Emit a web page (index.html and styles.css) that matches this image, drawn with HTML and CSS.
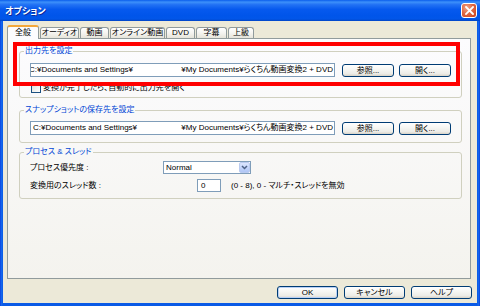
FILE: index.html
```html
<!DOCTYPE html>
<html lang="ja">
<head>
<meta charset="utf-8">
<title>オプション</title>
<link rel="stylesheet" href="styles.css">
</head>
<body>
<div class="window">
  <div class="titlebar">
    <span class="title">オプション</span>
    <span class="close"><svg width="9" height="9" viewBox="0 0 9 9"><path d="M1 1 L8 8 M8 1 L1 8" stroke="#fff" stroke-width="1.8" stroke-linecap="square"/></svg></span>
  </div>
  <div class="client">
    <div class="tabs">
      <div class="tab active t1">全般</div>
      <div class="tab t2">オーディオ</div>
      <div class="tab t3">動画</div>
      <div class="tab t4">オンライン動画</div>
      <div class="tab t5">DVD</div>
      <div class="tab t6">字幕</div>
      <div class="tab t7">上級</div>
    </div>
    <div class="panel">
      <fieldset class="group g1">
        <legend>出力先を設定</legend>
        <div class="pathrow">
          <div class="field path scrolled"><span class="seg first">C:¥Documents and Settings¥</span><span class="seg">¥My Documents¥らくちん動画変換2 + DVD</span></div>
          <button class="btn browse">参照...</button>
          <button class="btn open">開く...</button>
        </div>
        <div class="check"><span class="box"></span><span>変換が完了したら、自動的に出力先を開く</span></div>
      </fieldset>
      <fieldset class="group g2">
        <legend>スナップショットの保存先を設定</legend>
        <div class="pathrow">
          <div class="field path"><span class="seg first">C:¥Documents and Settings¥</span><span class="seg">¥My Documents¥らくちん動画変換2 + DVD</span></div>
          <button class="btn browse">参照...</button>
          <button class="btn open">開く...</button>
        </div>
      </fieldset>
      <fieldset class="group g3">
        <legend>プロセス &amp; スレッド</legend>
        <div class="row r1">
          <span class="lbl lbl1">プロセス優先度 :</span>
          <div class="select"><span class="val">Normal</span><span class="arrow"><svg width="7" height="5" viewBox="0 0 7 5"><path d="M1 1 L3.5 3.5 L6 1" fill="none" stroke="#4D6185" stroke-width="1.5"/></svg></span></div>
        </div>
        <div class="row r2">
          <span class="lbl lbl2">変換用のスレッド数 :</span>
          <div class="field spin">0</div>
          <span class="hint">(0 - 8), 0 - マルチ・スレッドを無効</span>
        </div>
      </fieldset>
    </div>
    <div class="footer">
      <button class="btn wide default">OK</button>
      <button class="btn wide">キャンセル</button>
      <button class="btn wide">ヘルプ</button>
    </div>
  </div>
  <div class="highlight"></div>
</div>
</body>
</html>
```
FILE: styles.css
```css
html, body {
  margin: 0;
  padding: 0;
  background: #fff;
}
body {
  font-family: "Liberation Sans", "Noto Sans CJK JP", sans-serif;
  font-size: 8px;
  font-feature-settings: "palt";
  color: #000;
}
.window {
  position: relative;
  width: 480px;
  height: 306px;
  display: flex;
  flex-direction: column;
  background: linear-gradient(to right, #0831D9 0, #166AEE 1px, #0A5AE6 3px, #0A5AE6 477px, #166AEE 479px, #0831D9 480px);
  overflow: hidden;
}
.titlebar {
  height: 21px;
  flex: none;
  display: flex;
  align-items: center;
  justify-content: space-between;
  padding: 0 3px 0 5px;
  background: linear-gradient(to bottom, #0A5EEC 0%, #3D90FA 10%, #2272F4 22%, #0659EE 45%, #0055EA 75%, #0256E8 90%, #0044C6 100%);
}
.title {
  color: #fff;
  font-weight: bold;
  font-size: 9px;
  line-height: 12px;
  text-shadow: 1px 1px 0 #0A2A9A;
}
.close {
  width: 16px;
  height: 15px;
  box-sizing: border-box;
  border: 1px solid #fff;
  border-radius: 3px;
  background: radial-gradient(circle at 35% 30%, #F0A68A 0%, #E06A45 45%, #C93D18 100%);
  display: flex;
  align-items: center;
  justify-content: center;
}
.client {
  flex: 1;
  margin: 0 3px 3px;
  background: #ECE9D8;
  padding: 4px 6px 4px 4px;
  display: flex;
  flex-direction: column;
}
.tabs {
  display: flex;
  align-items: flex-end;
  gap: 1px;
  height: 13px;
  position: relative;
  z-index: 1;
}
.tab {
  box-sizing: border-box;
  height: 11px;
  border: 1px solid #919B9C;
  border-bottom: none;
  border-radius: 3px 3px 0 0;
  background: linear-gradient(#FFFFFF, #F5F4F0 50%, #E6E4DA);
  text-align: center;
  line-height: 10px;
  white-space: nowrap;
}
.tab.active {
  height: 14px;
  margin-bottom: -1px;
  border-top: 2px solid #F3A73A;
  background: #FCFCFE;
  line-height: 12px;
}
.t1 { width: 32px; }
.t2 { width: 39px; }
.t3 { width: 29px; }
.t4 { width: 55px; }
.t5 { width: 29px; }
.t6 { width: 31px; }
.t7 { width: 26px; }

.panel {
  flex: none;
  height: 241px;
  box-sizing: border-box;
  border: 1px solid #919B9C;
  background: linear-gradient(#FCFCFE, #F4F3EE);
  padding: 6px 8px 0 11px;
}
.group {
  margin: 0;
  min-width: 0;
  border: 1px solid #D0D0BF;
  border-radius: 3px;
  padding: 6px 10px 4px;
}
.group legend {
  padding: 0 1px;
  margin-left: -6px;
  color: #0046D5;
  line-height: 12px;
}
.g2 { margin-top: 6px; padding-top: 5px; padding-bottom: 7px; }
.g3 { margin-top: 3px; padding-top: 3px; padding-bottom: 6px; }

.pathrow {
  display: flex;
  align-items: center;
}
.field {
  box-sizing: border-box;
  height: 14px;
  border: 1px solid #7F9DB9;
  background: #fff;
  line-height: 12px;
  white-space: nowrap;
  overflow: hidden;
}
.path {
  flex: 1;
  display: flex;
  justify-content: space-between;
  padding: 0 1px 0 2px;
}
.scrolled .first { margin-left: -4px; }
.btn {
  box-sizing: border-box;
  height: 13px;
  width: 52px;
  padding: 0;
  border: 1px solid #003C74;
  border-radius: 3px;
  background: linear-gradient(#FFFFFF, #F6F6F3 40%, #ECEBE6 80%, #D8D2C6);
  font: inherit;
  font-size: 8px;
  line-height: 11px;
  color: #000;
  text-align: center;
}
.browse { margin-left: 7px; }
.open { margin-left: 5px; }

.check {
  display: flex;
  align-items: center;
  margin-top: 5px;
  height: 11px;
  line-height: 11px;
}
.box {
  box-sizing: border-box;
  width: 10px;
  height: 10px;
  border: 1px solid #1C5180;
  background: linear-gradient(135deg, #DCDCD7, #FFFFFF);
  margin: 0 2px 0 1px;
}

.row {
  display: flex;
  align-items: center;
  height: 13px;
  line-height: 11px;
}
.r2 { margin-top: 5px; }
.lbl1 { width: 133px; }
.lbl2 { width: 167px; }
.select {
  box-sizing: border-box;
  width: 88px;
  height: 13px;
  border: 1px solid #7F9DB9;
  background: #fff;
  display: flex;
  align-items: stretch;
}
.select .val {
  flex: 1;
  padding-left: 2px;
  line-height: 11px;
}
.select .arrow {
  width: 11px;
  box-sizing: border-box;
  border: 1px solid #BACBF0;
  border-radius: 2px;
  background: linear-gradient(#DCE6FE, #C0D2FA 60%, #B0C6F5);
  display: flex;
  align-items: center;
  justify-content: center;
}
.spin {
  width: 24px;
  height: 13px;
  line-height: 11px;
  padding-left: 3px;
}
.hint { margin-left: 10px; }

.footer {
  display: flex;
  justify-content: flex-end;
  gap: 6px;
  margin-top: 7px;
  margin-right: -1px;
}
.wide { width: 61px; }
.default {
  box-shadow: inset 0 0 0 1px #B8D0F6;
}

.highlight {
  position: absolute;
  left: 13px;
  top: 42px;
  width: 447px;
  height: 44px;
  box-sizing: border-box;
  border: 4px solid #FF0000;
}
```
